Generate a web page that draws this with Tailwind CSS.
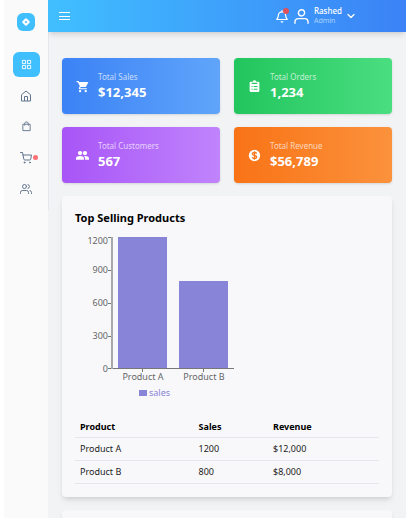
<!DOCTYPE html>
<html lang="en">
<head>
<meta charset="utf-8">
<meta name="viewport" content="width=device-width, initial-scale=1">
<title>Dashboard</title>
<script src="https://cdn.jsdelivr.net/npm/@tailwindcss/browser@4"></script>
</head>
<body class="bg-white font-['Noto_Sans',sans-serif] text-black">
<div class="flex h-screen overflow-hidden pl-1 pr-[9px]">
  <aside class="relative z-10 w-11 shrink-0 bg-[#fafafa]">
    <div class="flex h-[210px] w-[45px] flex-col items-center border-r border-gray-200 pt-[13px]">
      <a href="#" aria-label="Home page" class="flex size-[18px] items-center justify-center rounded-md bg-[#40bfff]">
        <svg class="size-2" viewBox="0 0 8 8" fill="none" stroke="#fff" stroke-width="2" stroke-linejoin="round"><path d="M4 1.2 6.8 4 4 6.8 1.2 4z"/></svg>
      </a>
      <nav class="mt-[21px] flex flex-col gap-1.5 text-slate-500" aria-label="Main">
        <a href="#" aria-label="Dashboard" class="flex h-[25px] w-[27px] items-center justify-center rounded-md bg-[#40bfff] text-white">
          <svg class="size-[11px]" viewBox="0 0 24 24" fill="none" stroke="currentColor" stroke-width="2"><path d="M3 3h7v7H3zM14 3h7v7h-7zM14 14h7v7h-7zM3 14h7v7H3z"/></svg>
        </a>
        <a href="#" aria-label="Home" class="flex h-[25px] w-[27px] items-center justify-center">
          <svg class="size-3" viewBox="0 0 24 24" fill="none" stroke="currentColor" stroke-width="2" stroke-linejoin="round"><path d="M3 9.500 12 2l9 7.500V22H3z"/><path d="M9 22v-9h6v9"/></svg>
        </a>
        <a href="#" aria-label="Orders" class="flex h-[25px] w-[27px] items-center justify-center">
          <svg class="size-[11px]" viewBox="0 0 24 24" fill="none" stroke="currentColor" stroke-width="2" stroke-linejoin="round"><path d="M4 7h16v14H4z"/><path d="M8 10V6a4 4 0 0 1 8 0v4"/></svg>
        </a>
        <a href="#" aria-label="Cart" class="relative flex h-[25px] w-[27px] items-center justify-center">
          <svg class="size-3" viewBox="0 0 24 24" fill="none" stroke="currentColor" stroke-width="2" stroke-linecap="round" stroke-linejoin="round"><circle cx="9" cy="21" r="1"/><circle cx="20" cy="21" r="1"/><path d="M1 1h4l2.700 13.400a2 2 0 0 0 2 1.600h9.700a2 2 0 0 0 2-1.600L23 6H6"/></svg>
          <span class="absolute top-[10px] left-[20px] size-[5px] rounded-full bg-[#ff7077]"></span>
        </a>
        <a href="#" aria-label="Users" class="flex h-[25px] w-[27px] items-center justify-center">
          <svg class="size-3" viewBox="0 0 24 24" fill="none" stroke="currentColor" stroke-width="2" stroke-linecap="round" stroke-linejoin="round"><path d="M17 21v-2a4 4 0 0 0-4-4H5a4 4 0 0 0-4 4v2"/><circle cx="9" cy="7" r="4"/><path d="M23 21v-2a4 4 0 0 0-3-3.870M16 3.130a4 4 0 0 1 0 7.750"/></svg>
        </a>
      </nav>
    </div>
  </aside>

  <div class="flex min-w-0 flex-1 flex-col overflow-hidden bg-[#f2f3f5]">
    <header class="relative z-20 flex h-8 shrink-0 items-center justify-between bg-linear-to-r/srgb from-[#40bfff] to-[#3b82f6] pr-[51px] pl-[10px] text-white shadow-md">
      <button type="button" aria-label="Toggle menu">
        <svg class="size-[13px]" viewBox="0 0 13 13" fill="none" stroke="currentColor" stroke-width="1"><path d="M1 2.500h11M1 6.500h11M1 9.500h11"/></svg>
      </button>
      <div class="flex items-center gap-[5px]">
        <button type="button" aria-label="Notifications" class="relative">
          <svg class="size-[14px]" viewBox="0 0 24 24" fill="none" stroke="currentColor" stroke-width="2" stroke-linecap="round" stroke-linejoin="round"><path d="M3 18h18c-2-2-2.500-3.500-2.800-7a6.200 6.200 0 0 0-12.400 0c-.3 3.500-.8 5-2.800 7zM10.500 22h3M12 2.500V5"/></svg>
          <span class="absolute -top-px right-0 size-[6px] rounded-full bg-[#e0505a]"></span>
        </button>
        <button type="button" class="flex items-center gap-[5px] text-left">
          <svg class="size-[15px]" viewBox="0 0 14 14" fill="none" stroke="currentColor" stroke-width="1.300" stroke-linecap="round"><circle cx="7" cy="3.600" r="2.900"/><path d="M.9 13.300v-1.300a3 3 0 0 1 3-3h6.200a3 3 0 0 1 3 3v1.300"/></svg>
          <span class="flex flex-col">
            <span class="text-[8px] leading-[10px] font-medium">Rashed</span>
            <span class="text-[7px] leading-[10px] text-[#a9d2ff]">Admin</span>
          </span>
          <svg class="size-[8px]" viewBox="0 0 8 8" fill="none" stroke="currentColor" stroke-width="1.300" stroke-linecap="round" stroke-linejoin="round"><path d="m1 2.500 3 3 3-3"/></svg>
        </button>
      </div>
    </header>

    <main class="flex flex-col gap-[13px] px-[14px] pt-[26px]">
      <section class="grid grid-cols-2 gap-x-[14px] gap-y-[13px] text-white" aria-label="Totals">
        <div class="flex h-14 items-center gap-[9px] rounded bg-linear-to-r/srgb from-[#3b82f6] to-[#60a5fa] px-[14px] shadow">
          <svg class="size-[13px]" viewBox="0 0 24 24" fill="currentColor"><path d="M1 2v2h2.500l3.600 7.600-1.600 2.600C4.700 15.500 5.600 17 7 17h13v-2H7.500l1.100-2h8.300c.8 0 1.500-.4 1.800-1L22.500 5c.4-.7-.1-1.500-.9-1.500H5.700L4.800 2z"/><circle cx="7.500" cy="20.500" r="2.200"/><circle cx="18" cy="20.500" r="2.200"/></svg>
          <div>
            <p class="text-[8px] leading-3 text-white/70">Total Sales</p>
            <p class="text-[13px] leading-[18px] font-bold">$12,345</p>
          </div>
        </div>
        <div class="flex h-14 items-center gap-[9px] rounded bg-linear-to-r/srgb from-[#22c55e] to-[#4ade80] px-[14px] shadow">
          <svg class="size-[13px]" viewBox="0 0 24 24" fill="currentColor"><path fill-rule="evenodd" d="M5 3h3.500a3.700 3.700 0 0 1 7 0H19a2 2 0 0 1 2 2v15a2 2 0 0 1-2 2H5a2 2 0 0 1-2-2V5a2 2 0 0 1 2-2zm2 2v2.500h10V5zm-.500 6v1.800h2V11zm4 0v1.800h7V11zm-4 5v1.800h2V16zm4 0v1.800h7V16z"/></svg>
          <div>
            <p class="text-[8px] leading-3 text-white/70">Total Orders</p>
            <p class="text-[13px] leading-[18px] font-bold">1,234</p>
          </div>
        </div>
        <div class="flex h-14 items-center gap-[9px] rounded bg-linear-to-r/srgb from-[#a855f7] to-[#c084fc] px-[14px] shadow">
          <svg class="size-[13px]" viewBox="0 0 24 24" fill="currentColor"><circle cx="7.500" cy="7.500" r="4"/><circle cx="16.500" cy="7.500" r="4"/><path d="M0 20v-2.500C0 14.500 3 13 7.500 13s7.200 1.500 7.200 4.500V20zM16.800 20v-2.500c0-1.800-.8-3.200-2-4.300.6-.1 1.100-.2 1.700-.2 4.500 0 7.500 1.500 7.500 4.500V20z"/></svg>
          <div>
            <p class="text-[8px] leading-3 text-white/70">Total Customers</p>
            <p class="text-[13px] leading-[18px] font-bold">567</p>
          </div>
        </div>
        <div class="flex h-14 items-center gap-[9px] rounded bg-linear-to-r/srgb from-[#f97316] to-[#fb923c] px-[14px] shadow">
          <svg class="size-[13px]" viewBox="0 0 24 24" fill="none"><circle cx="12" cy="12" r="10.500" fill="#fff"/><path d="M16 8.500c-.6-1.200-2-2-4-2-2.300 0-3.900 1-3.900 2.700 0 3.900 8 1.700 8 5.600 0 1.700-1.600 2.700-4.100 2.700-2.200 0-3.700-.8-4.300-2.200M12 4v16" stroke="#fa7a20" stroke-width="2.400"/></svg>
          <div>
            <p class="text-[8px] leading-3 text-white/70">Total Revenue</p>
            <p class="text-[13px] leading-[18px] font-bold">$56,789</p>
          </div>
        </div>
      </section>

      <section class="rounded bg-[#f8f8fb] px-[13px] pt-[14px] pb-[13px] shadow-md">
        <h2 class="text-[11px] leading-4 font-bold">Top Selling Products</h2>
        <svg class="mt-[6px] h-[172px] w-[165px] text-[9px]" viewBox="0 0 165 172" role="img" aria-label="Sales by product">
          <g fill="#8884d8"><path d="M43 5h49v132H43zM104 49h49v88h-49zM64 158h8v6h-8z"/></g>
          <g fill="none" stroke="#777" stroke-width="1"><path d="M33 5.500h4M33 38.500h4M33 71.500h4M33 104.500h4M33 136.500h126M67.500 137v3M128.500 137v3"/><path d="M37 5v132" stroke="#a8a8ab" stroke-width="2"/></g>
          <g fill="#666" text-anchor="end"><text x="33" y="12">1200</text><text x="33" y="41">900</text><text x="33" y="74">600</text><text x="33" y="107">300</text><text x="33" y="140">0</text></g>
          <g fill="#666" text-anchor="middle"><text x="68" y="148">Product A</text><text x="129" y="148">Product B</text></g>
          <text x="74" y="164" fill="#8884d8">sales</text>
        </svg>
        <table class="mt-3 w-full table-fixed text-left text-[9px] leading-[14px]">
          <colgroup><col class="w-[39%]"><col class="w-[24.5%]"><col></colgroup>
          <thead>
            <tr class="border-b border-gray-200"><th class="px-[5px] pt-1 pb-[3px] font-bold">Product</th><th class="px-[5px] pt-1 pb-[3px] font-bold">Sales</th><th class="px-[5px] pt-1 pb-[3px] font-bold">Revenue</th></tr>
          </thead>
          <tbody class="text-[#222]">
            <tr class="border-b border-gray-200"><td class="px-[5px] py-1">Product A</td><td class="px-[5px] py-1">1200</td><td class="px-[5px] py-1">$12,000</td></tr>
            <tr class="border-b border-gray-200"><td class="px-[5px] py-1">Product B</td><td class="px-[5px] py-1">800</td><td class="px-[5px] py-1">$8,000</td></tr>
          </tbody>
        </table>
      </section>

      <section class="h-40 shrink-0 rounded bg-[#f8f8fb] shadow-md" aria-label="More"></section>
    </main>
  </div>
</div>
</body>
</html>
